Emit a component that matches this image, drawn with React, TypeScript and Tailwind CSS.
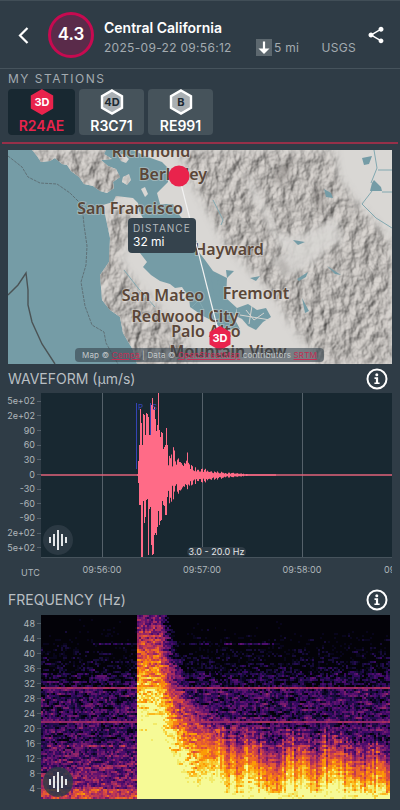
import React from 'react';
import { MdShare } from 'react-icons/md';

type Badge = 'active' | 'idle';

const stations: { id: string; model: string; badge: Badge }[] = [
  { id: 'R24AE', model: '3D', badge: 'active' },
  { id: 'R3C71', model: '4D', badge: 'idle' },
  { id: 'RE991', model: 'B', badge: 'idle' },
];

const cities = [
  { name: 'Richmond', x: 143, y: 7 },
  { name: 'Berkeley', x: 165, y: 30 },
  { name: 'San Francisco', x: 122, y: 64 },
  { name: 'Hayward', x: 221, y: 105 },
  { name: 'San Mateo', x: 155, y: 151 },
  { name: 'Fremont', x: 248, y: 149 },
  { name: 'Redwood City', x: 177, y: 172 },
  { name: 'Palo Alto', x: 198, y: 187 },
  { name: 'Mountain View', x: 220, y: 207 },
];

const countLabels = ['5e+02', '2e+02', '90', '60', '30', '0', '-30', '-60', '-90', '2e+02', '5e+02'];
const hzLabels = ['48', '44', '40', '36', '32', '28', '24', '20', '16', '12', '8', '4'];

function random(seed: number) {
  let s = seed;
  return () => {
    s = (s * 1664525 + 1013904223) % 4294967296;
    return s / 4294967296;
  };
}

/* ---------- waveform ---------- */

// [x, counts above zero, counts below zero]
const envelope = [
  [0, 0, 0], [96, 0, 0], [97, 14, 8], [98, 30, 30], [99, 66, 30], [100, 52, 82], [101, 30, 82], [102, 61, 26],
  [103, 60, 48], [104, 40, 42], [105, 62, 25], [106, 61, 24], [107, 58, 80], [108, 40, 34], [109, 48, 32],
  [110, 70, 70], [111, 77, 80], [112, 66, 79], [113, 68, 60], [114, 56, 58], [115, 44, 60], [116, 50, 52],
  [117, 82, 36], [118, 45, 50], [119, 38, 46], [120, 43, 45], [121, 42, 26], [122, 26, 30], [123, 28, 31],
  [124, 30, 40], [125, 47, 40], [126, 30, 22], [127, 14, 23], [129, 17, 23], [131, 16, 20], [133, 31, 21],
  [134, 25, 20], [136, 12, 13], [139, 15, 18], [142, 8, 10], [146, 19, 12], [148, 12, 12], [152, 6, 7],
  [160, 6, 7], [172, 3, 4], [190, 2, 2], [215, 0, 0], [351, 0, 0],
];

function buildTrace() {
  const rand = random(7);
  let d = '';
  let seg = 0;
  for (let x = 96; x < 235; x++) {
    while (seg < envelope.length - 2 && envelope[seg + 1][0] <= x) seg++;
    const [x0, u0, l0] = envelope[seg];
    const [x1, u1, l1] = envelope[seg + 1];
    const t = (x - x0) / (x1 - x0);
    const jitter = x > 126 ? 0.5 + rand() * 0.8 : 1;
    const up = Math.max(0.6, (u0 + (u1 - u0) * t) * jitter);
    const low = Math.max(0.6, (l0 + (l1 - l0) * t) * jitter);
    d += `M${x + 0.5} ${(82 - up).toFixed(1)}V${(82 + low).toFixed(1)}`;
  }
  return d;
}

const trace = buildTrace();

/* ---------- spectrogram ---------- */

const palette = [
  '#08051c', '#150b37', '#240c4f', '#390963', '#4d0d6c', '#61136e', '#771c6d', '#932667',
  '#a92e5e', '#bf3952', '#d24644', '#e35933', '#ee6a24', '#f78212', '#fb9b06', '#fbb81d',
  '#f8cd37', '#f2ea69', '#f6fa96',
];

function buildSpectrogram() {
  const rand = random(42);
  const cols = 175;
  const rows = 92;
  const paths: string[] = palette.map(() => '');

  const streaks: number[] = [];
  for (let c = 0; c < cols; c++) {
    streaks.push(0.09 * Math.sin(c * 0.31) + 0.05 * Math.sin(c * 0.13 + 2) + (rand() - 0.5) * 0.26);
  }

  for (let r = 0; r < rows; r++) {
    const y = r * 2;
    const h = (184 - y) / 184;
    let floor = 0.17;
    if (y < 58) floor = -0.22 + y / 250;
    else if (y < 74) floor = 0.08;
    if (y > 128) floor = 0.2 + ((y - 128) / 56) * 0.2;
    if (y > 172) floor = 0.52;
    const strong = y === 72 || y === 106;
    let prev = rand();
    let run = -1;
    let start = 0;
    for (let c = 0; c <= cols; c++) {
      let level = -1;
      if (c < cols) {
        const x = c * 2;
        prev = prev * 0.4 + rand() * 0.6;
        let noise = (prev - 0.5) * 0.52;
        let v = floor;
        if (x >= 96) {
          const t = x - 96;
          const late = Math.max(0, t - 22);
          const onset = 1.42 - 1.14 * Math.pow(h, 1.3);
          const fade = (0.4 + 1.0 * h) * (1 - Math.exp(-late / 32)) + late * h * 0.003;
          const energy = onset - fade;
          const wave = t > 60 && h < 0.4 && h > 0.04 ? streaks[c] * Math.min(1, (t - 60) / 30) : 0;
          v = Math.max(floor, energy + wave);
          if (t > 60 && energy > 0.45) noise *= 0.6;
        }
        if (strong) {
          v = Math.max(v, 0.42);
          noise *= 0.2;
        }
        if (y === 130) v = Math.max(v, 0.34);
        if (y === 28 && x > 50 && x < 240) v = Math.max(v, 0.1);
        if (Math.hypot(x - 343, (y - 164) * 1.5) < 6) v = Math.max(v, 0.66);
        level = Math.floor((v + noise) * 19);
        if (level > 18) level = 18;
        if (level < 0) level = -1;
      }
      if (level !== run || c === cols) {
        if (run >= 0) paths[run] += `M${start * 2} ${y}h${(c - start) * 2}v2h-${(c - start) * 2}z`;
        run = level;
        start = c;
      }
    }
  }
  return paths;
}

const spectrogram = buildSpectrogram();

/* ---------- small parts ---------- */

function Hexagon({ label, badge }: { label: string; badge: Badge }) {
  const active = badge === 'active';
  return (
    <svg viewBox="0 0 24 26" className="h-[26px] w-6 shrink-0">
      <path
        d="M12 1.500 22 7.200V18.800L12 24.500 2 18.800V7.200Z"
        className={active ? 'fill-[#e9234c] stroke-[#e9234c]' : 'fill-[#a9afb3] stroke-white'}
        strokeWidth="2.400"
      />
      <text
        x="12"
        y="17"
        textAnchor="middle"
        className={`font-['Inter',sans-serif] text-[11px] font-bold ${active ? 'fill-white' : 'fill-[#1c2932]'}`}
      >
        {label}
      </text>
    </svg>
  );
}

function InfoButton({ label }: { label: string }) {
  return (
    <button type="button" aria-label={label} className="mr-1">
      <svg viewBox="0 0 22 22" className="block h-[22px] w-[22px]">
        <circle cx="11" cy="11" r="9.500" fill="none" stroke="white" strokeWidth="2" />
        <circle cx="10.800" cy="6.800" r="1.500" fill="white" />
        <path d="M8.500 9.300h3.600v5.200h1.500v1.600H8.400v-1.600h1.500v-3.600H8.500z" fill="white" />
      </svg>
    </button>
  );
}

function ListenButton({ label }: { label: string }) {
  return (
    <button
      type="button"
      aria-label={label}
      className="absolute bottom-[2px] left-[2px] flex h-[30px] w-[30px] items-center justify-center rounded-full bg-[#2f3c46]/85"
    >
      <svg viewBox="0 0 20 22" className="h-[22px] w-5" stroke="#e3e6e8" strokeWidth="2">
        <path d="M2 8v6M6 5v12M10 1v20M14 5v12M18 8v6" />
      </svg>
    </button>
  );
}

function StationMap() {
  return (
    <div className="relative mx-2 mt-[6px] h-[214px] overflow-hidden bg-[#759ca6]">
      <svg viewBox="0 0 384 214" preserveAspectRatio="xMidYMid slice" className="h-full w-full">
        <defs>
          <filter id="relief" x="-5%" y="-5%" width="110%" height="110%" colorInterpolationFilters="sRGB">
            <feTurbulence type="fractalNoise" baseFrequency="0.100 0.075" numOctaves="4" seed="11" result="noise" />
            <feDiffuseLighting in="noise" surfaceScale="2.500" diffuseConstant="1.050" lightingColor="#d0ccc8" result="lit">
              <feDistantLight azimuth="215" elevation="58" />
            </feDiffuseLighting>
            <feGaussianBlur in="SourceAlpha" stdDeviation="4" result="soft" />
            <feComposite in="lit" in2="soft" operator="in" />
          </filter>
          <filter id="feather" x="-20%" y="-20%" width="140%" height="140%">
            <feGaussianBlur stdDeviation="3" />
          </filter>
          <clipPath id="land">
            <path d="M24 0 29 6 33 12 42 11 47 8 54 14 59 15 63 21 71 27 76 34 85 36 92 41 99 43 106 38 105 32 112 27 108 19 100 16 93 10 104 9 96 4 98 0Z" />
            <path d="M95 55 105 52 108 46 125 48 130 53 131 61 135 68 133 80 138 95 132 103 139 112 135 117 143 125 152 131 162 134 167 138 174 137 181 148 182 157 195 166 205 171 215 180 232 179 226 168 229 158 218 148 219 128 205 121 197 110 190 101 189 92 180 75 172 66 165 54 152 54 149 43 160 32 160 18 154 12 137 6 125 0 384 0 384 214 129 214 125 200 115 183 112 167 102 160 94 150 92 125 101 112 102 88Z" />
            <path d="M110 5 116 4 121 9 118 13 113 11ZM115 27 121 24 123 30 119 35 114 32ZM133 39 137 37 140 44 137 47Z" />
          </clipPath>
        </defs>

        <g clipPath="url(#land)">
          <rect width="384" height="214" fill="#d9d7d4" />
          <g filter="url(#relief)">
            <path d="M18 0H110L121 36 104 48 20 20Z" />
            <path d="M102 58 122 62 124 84 110 108 120 124 137 144 154 162 174 184 188 214H120L90 155 92 120Z" />
            <path d="M172 2 184 0H326L330 28 352 58 384 92V214H312L294 188 281 170 268 148 254 132 232 108 214 88 202 62 186 36Z" />
          </g>
          <path
            d="M237 22 244 48 256 66 268 92 280 104 262 108 278 128 300 118 322 98 336 92 328 68 312 76 284 86 270 84 262 62 250 40Z"
            fill="#d9d7d4"
            opacity="0.850"
            filter="url(#feather)"
          />
          <path d="M264 28 275 14 285 8 280 28 272 34ZM304 30 314 44 318 66 310 58ZM205 44 212 72 206 68ZM268 104 280 116 284 128 272 118Z" fill="#6f6b68" opacity="0.400" filter="url(#feather)" />
        </g>

        <g fill="#759ca6">
          <path d="M316 39 323 43 325 48 318 47ZM366 30 373 37 374 41 362 41 364 33ZM354 8 364 6 361 14 356 15ZM289 129 300 122 298 127 291 131ZM319 116 333 125 327 124ZM294 148 301 161 297 163ZM285 90 297 92 290 95Z" />
          <path d="M203 126 211 127 209 134 216 136 211 141 213 147 206 145ZM229 158 240 154 249 160 258 158 263 167 255 172 248 180 240 176 234 169 228 166Z" />
          <path d="M218 120 226 121 219 128ZM242 128 252 126 248 131Z" />
        </g>
        <g fill="none" stroke="#82a8b0">
          <path d="M205 50 215 70 213 75M366 0 369 18 363 33M370 20H384M374 42 384 42M364 41 354 54 368 68 384 78M116 120 130 138 147 157" />
          <path d="M172 151 179 147 190 151 184 157M188 145 196 160" />
          <path d="M238 160 246 170 256 163M244 156 241 174M232 165 262 170" stroke="#d6d4d0" />
        </g>

        <g fill="none" stroke="#4b5355">
          <path d="M0 145 10 135 18 123 20 140 20 155 24 172 34 194 47 214" strokeWidth="1.400" />
          <path
            d="M0 6 14 17 20 27 32 33 49 34 62 43 74 55 76 75 79 96 78 115 73 132 77 156 84 175 96 182 98 193 110 214"
            stroke="#5f7177"
            strokeDasharray="3 1"
          />
        </g>

        <g
          textAnchor="middle"
          fill="#5a4638"
          stroke="#e2dfdb"
          strokeOpacity="0.400"
          strokeWidth="2"
          paintOrder="stroke"
          className="font-['Noto_Sans','Open_Sans',sans-serif] text-base font-semibold"
        >
          {cities.map((city) => (
            <text key={city.name} x={city.x} y={city.y}>
              {city.name}
            </text>
          ))}
        </g>

        <path d="M171 26 212 188" stroke="#f2f2f2" strokeWidth="1.200" />
        <circle cx="171" cy="26" r="10.500" fill="#e9234c" />
        <path d="M212 176 222.500 182V194.500L212 200.500 201.500 194.500V182Z" fill="#e9234c" />
        <text x="212" y="192" textAnchor="middle" fill="white" className="font-['Inter',sans-serif] text-[11px] font-bold">
          3D
        </text>
      </svg>

      <div className="absolute left-[120px] top-[68px] rounded bg-[#35434d] px-[5px] pb-1 pt-[3px]">
        <p className="text-[10px] leading-[14px] tracking-widest text-[#b4babd]">DISTANCE</p>
        <p className="text-xs leading-[14px] text-white">32 mi</p>
      </div>

      <p className="absolute bottom-[2px] left-[67px] whitespace-nowrap rounded bg-[#35434d]/60 px-[7px] text-[8px] leading-[14px] tracking-wide text-[#c3c8ca]">
        Map © <a href="#cempa" className="text-[#c22f55] underline">Cempa</a> | Data ©{' '}
        <a href="#osm" className="text-[#c22f55] underline">OpenStreetMap</a> contributors{' '}
        <a href="#srtm" className="text-[#c22f55] underline">SRTM</a>
      </p>
    </div>
  );
}

function WaveformChart() {
  return (
    <div className="mr-2 flex items-start">
      <ul className="flex h-[162px] w-[41px] flex-col pt-px text-right text-[9px] leading-[14px] text-[#b0b7bb]">
        {countLabels.map((label, index) => (
          <li key={index} className="flex flex-1 items-center justify-end gap-[2px] whitespace-nowrap">
            {label}
            <span className="h-px w-1 bg-[#55616a]" />
          </li>
        ))}
      </ul>
      <div className="min-w-0 flex-1">
        <div className="relative h-[164px] bg-[#182831]">
          <svg viewBox="0 0 351 164" preserveAspectRatio="none" className="block h-full w-full">
            <path d="M61.500 0V164M161.500 0V164M261.500 0V164" stroke="#55616a" />
            <path d="M0 82H351" stroke="#e0627a" strokeWidth="1.400" />
            <path d={trace} stroke="#ff6b87" />
            <path d="M95.500 10V76M109.500 10V42" stroke="#3545b5" />
            <text x="97" y="17" className="fill-[#3545b5] text-[8px]">P</text>
            <text x="111" y="17" className="fill-[#3545b5] text-[8px]">S</text>
          </svg>
          <ListenButton label="Listen to waveform" />
          <span className="absolute bottom-0 left-1/2 -translate-x-1/2 whitespace-nowrap rounded-full bg-[#2f3c46] px-[2px] text-[9px] leading-[10px] text-[#e3e6e8]">
            3.0 - 20.0 Hz
          </span>
        </div>
        <div className="relative h-[28px] overflow-hidden border-t border-[#46535c] text-[9px] leading-6 text-[#b0b7bb]">
          <span className="absolute left-[61px] -translate-x-1/2">09:56:00</span>
          <span className="absolute left-[161px] -translate-x-1/2">09:57:00</span>
          <span className="absolute left-[261px] -translate-x-1/2">09:58:00</span>
          <span className="absolute left-[343px]">09:59:00</span>
        </div>
      </div>
    </div>
  );
}

function Spectrogram() {
  return (
    <div className="mr-[10px] flex">
      <ul className="flex w-[41px] flex-col pb-[3px] pt-px text-[9px] leading-[14px] text-[#b0b7bb]">
        {hzLabels.map((label) => (
          <li key={label} className="flex flex-1 items-center justify-end gap-[2px]">
            {label}
            <span className="h-px w-1 bg-[#55616a]" />
          </li>
        ))}
      </ul>
      <div className="relative h-[184px] min-w-0 flex-1 bg-[#030208]">
        <svg viewBox="0 0 350 184" preserveAspectRatio="none" className="block h-full w-full">
          {spectrogram.map((d, index) => (
            <path key={index} d={d} fill={palette[index]} shapeRendering="crispEdges" />
          ))}
        </svg>
        <ListenButton label="Listen to spectrogram" />
      </div>
    </div>
  );
}

export default function App() {
  return (
    <main className="min-h-screen overflow-hidden border-t border-[#414e57] bg-[#2f3c46] font-['Inter',sans-serif]">
      <header className="flex h-[68px] items-center border-b border-[#46535c] pl-4 pr-[14px]">
        <button type="button" aria-label="Back" className="mr-4">
          <svg viewBox="0 0 16 20" className="block h-5 w-4" fill="none" stroke="white" strokeWidth="2.200">
            <path d="M11.500 3 4 10.500 11.500 18" />
          </svg>
        </button>
        <div className="flex h-[46px] w-[46px] shrink-0 items-center justify-center rounded-full border-[3px] border-[#c70a50] bg-[#5a2b4a] text-[17px] font-semibold text-white">
          4.3
        </div>
        <div className="ml-[10px] min-w-0 flex-1 pt-[6px]">
          <h1 className="text-sm font-semibold leading-5 text-white">Central California</h1>
          <div className="flex items-center text-xs leading-5 tracking-wide text-[#a3abb0]">
            <time className="w-[152px] whitespace-nowrap">2025-09-22 09:56:12</time>
            <span className="flex items-center gap-[2px] whitespace-nowrap">
              <svg viewBox="0 0 16 17" className="h-[17px] w-4">
                <rect width="16" height="17" fill="#5d686f" />
                <path d="M8 2.500V11" stroke="white" strokeWidth="2.200" />
                <path d="M2.500 9.500H13.500L8 15Z" fill="white" />
              </svg>
              5 mi
            </span>
            <span className="ml-auto">USGS</span>
          </div>
        </div>
        <button type="button" aria-label="Share" className="ml-[10px]">
          <MdShare className="h-5 w-5 text-white" />
        </button>
      </header>

      <section>
        <h2 className="mx-2 text-xs leading-5 tracking-[1.500px] text-[#a3abb0]">MY STATIONS</h2>
        <div className="mx-2 flex gap-1">
          {stations.map((station) => (
            <button
              key={station.id}
              type="button"
              className={
                station.badge === 'active'
                  ? 'flex h-[46px] w-[67px] flex-col items-center rounded bg-[#182831] text-sm font-semibold leading-[22px] text-[#e9234c]'
                  : 'flex h-[46px] w-[65px] flex-col items-center rounded bg-[#46535b] text-sm font-semibold leading-[22px] text-white'
              }
            >
              <Hexagon label={station.model} badge={station.badge} />
              {station.id}
            </button>
          ))}
        </div>
        <div className="mx-[2px] mt-[7px] h-[2px] bg-[#963049]" />
      </section>

      <StationMap />

      <section>
        <div className="mx-2 flex h-[29px] items-center justify-between">
          <h2 className="text-sm text-[#b9bfc3]">WAVEFORM (µm/s)</h2>
          <InfoButton label="About the waveform" />
        </div>
        <div className="relative">
          <WaveformChart />
          <span className="absolute bottom-[6px] left-[21px] text-[9px] leading-3 text-[#b0b7bb]">UTC</span>
        </div>
      </section>

      <section>
        <div className="mx-2 flex h-[30px] items-center justify-between">
          <h2 className="text-sm text-[#b9bfc3]">FREQUENCY (Hz)</h2>
          <InfoButton label="About the frequency" />
        </div>
        <Spectrogram />
      </section>
    </main>
  );
}
